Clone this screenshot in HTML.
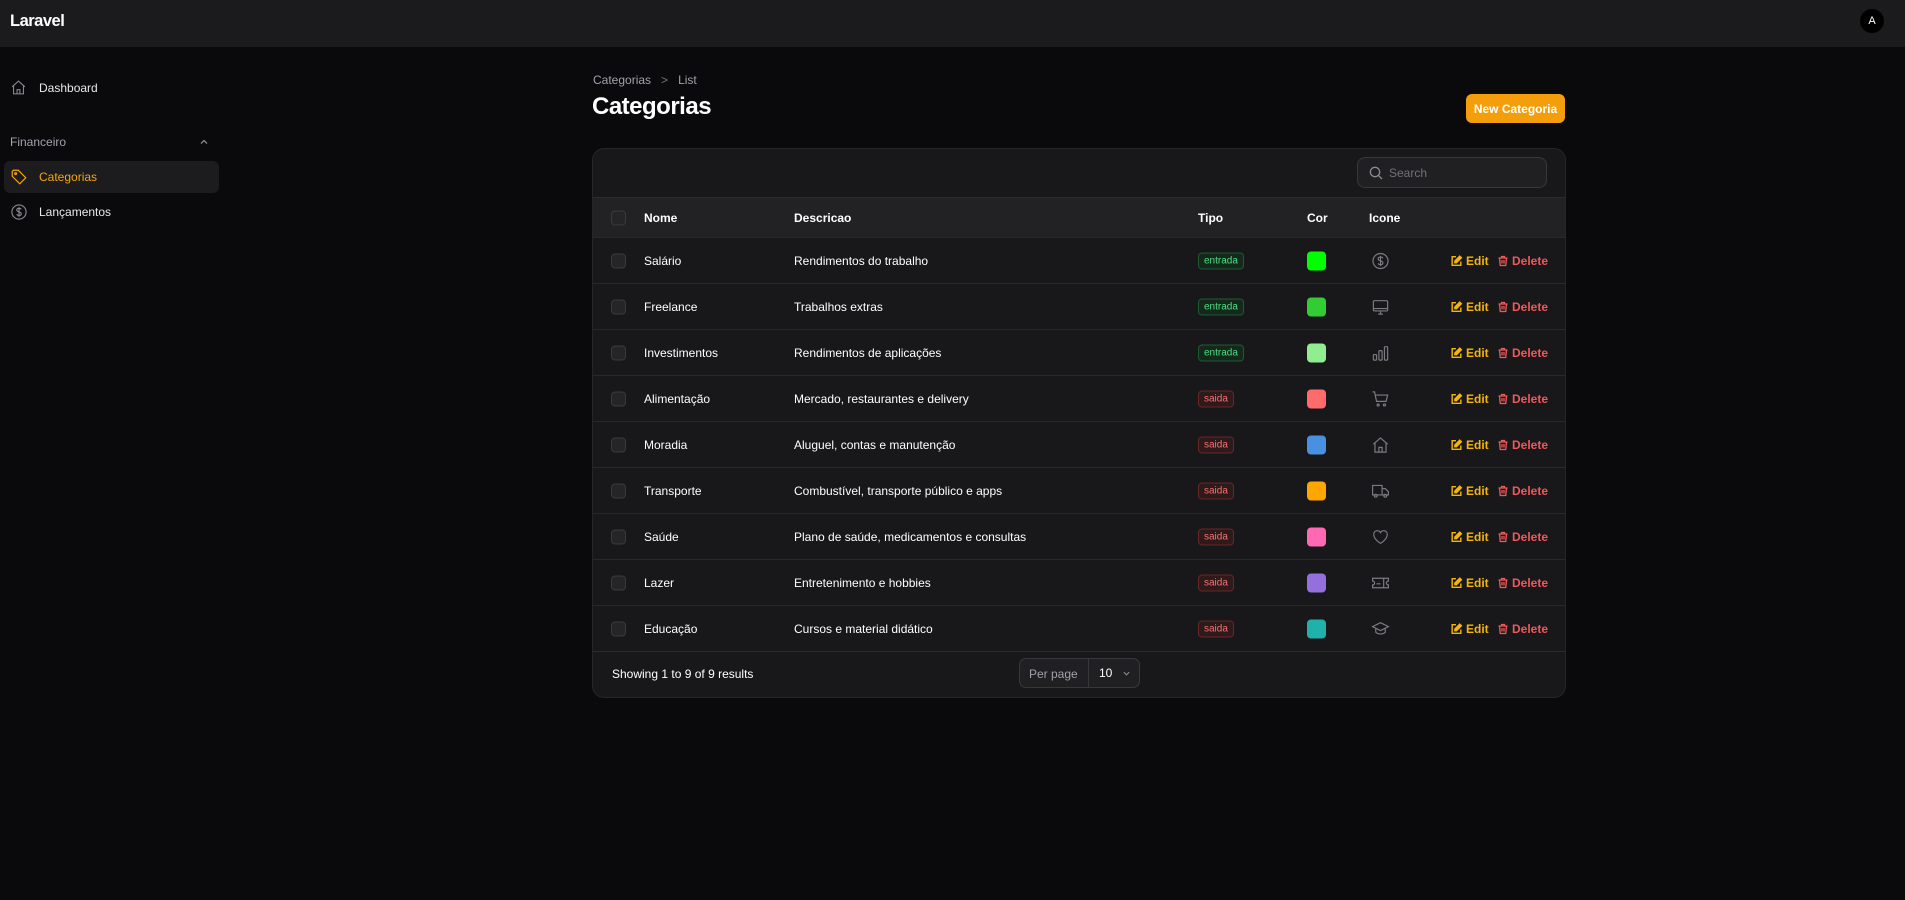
<!DOCTYPE html>
<html><head><meta charset="utf-8"><style>
*{box-sizing:border-box;margin:0;padding:0}
body{width:1905px;height:900px;background:#0a0a0c;font-family:"Liberation Sans",sans-serif;color:#fff;position:relative;overflow:hidden;font-size:12px}
.abs{position:absolute}
.top{left:0;top:0;width:1905px;height:47px;background:#1b1b1d}
.logo{left:10px;top:12px;font-size:16.5px;font-weight:bold;letter-spacing:-0.5px}
.av{left:1860px;top:9px;width:24px;height:24px;border-radius:50%;background:#000;font-size:11px;display:flex;align-items:center;justify-content:center}
.nav{font-size:12px;color:#e8e8ea}
svg{display:block}
.card{left:592px;top:148px;width:974px;height:550px;background:#18181b;border:1px solid #262629;border-radius:12px;overflow:hidden}
.hdr{left:0;top:48px;width:100%;height:41px;background:#222225;border-top:1px solid #2c2c2f}
.row{left:0;width:100%;height:46px;border-top:1px solid #28282b}
.cb{width:15px;height:15px;border:1px solid #3a3a3d;border-radius:4px;background:#252528}
.cell{position:absolute;top:50%;transform:translateY(-50%);white-space:nowrap}
.b{font-weight:bold}
.badge{font-size:10px;padding:2px 5px;border-radius:4px;border:1px solid}
.ent{color:#4ade80;border-color:#1f5a33;background:#14291c}
.sai{color:#f87171;border-color:#6a2626;background:#2e1a1b}
.sw{width:19px;height:19px;border-radius:4px}
.ed{color:#f5b50a;font-weight:bold;font-size:12px}
.dl{color:#f0585a;font-weight:bold;font-size:12px}
</style></head><body>
<div class="abs top"></div>
<div class="abs logo">Laravel</div>
<div class="abs av">A</div>

<svg class="abs" style="left:10px;top:79px" width="17" height="17" viewBox="0 0 24 24" fill="none" stroke="#8a8a90" stroke-width="1.5"><path d="M3 11 12 3l9 8M5 9.5V21h14V9.5M10 21v-6h4v6"/></svg>
<div class="abs nav" style="left:39px;top:81px">Dashboard</div>
<div class="abs" style="left:10px;top:135px;color:#a1a1aa;font-size:12px">Financeiro</div>
<svg class="abs" style="left:199px;top:137px" width="10" height="10" viewBox="0 0 10 10" fill="none" stroke="#8a8a90" stroke-width="1.3"><path d="M2 6.5 5 3.5 8 6.5"/></svg>
<div class="abs" style="left:4px;top:161px;width:215px;height:32px;background:#1c1c1f;border-radius:6px"></div>
<svg class="abs" style="left:10px;top:168px" width="18" height="18" viewBox="0 0 24 24" fill="none" stroke="#f5a50b" stroke-width="1.6"><path d="M3 4.5 4.5 3H11l10 10-8 8L3 11z"/><circle cx="7.5" cy="7.5" r="1.2"/></svg>
<div class="abs nav" style="left:39px;top:170px;color:#f5a50b">Categorias</div>
<svg class="abs" style="left:10px;top:203px" width="18" height="18" viewBox="0 0 24 24" fill="none" stroke="#8a8a90" stroke-width="1.5"><circle cx="12" cy="12" r="9.5"/><path d="M15 8.5c-.5-1-1.7-1.5-3-1.5-1.8 0-3 .9-3 2.3 0 3.2 6 1.7 6 5 0 1.4-1.3 2.3-3 2.3-1.4 0-2.6-.6-3.1-1.6M12 5.5v13"/></svg>
<div class="abs nav" style="left:39px;top:205px">Lançamentos</div>

<div class="abs" style="left:593px;top:73px;color:#a1a1aa;font-size:12px">Categorias&nbsp;&nbsp;&nbsp;<span style="color:#777">&gt;</span>&nbsp;&nbsp;&nbsp;List</div>
<div class="abs" style="left:592px;top:93px;font-size:24px;font-weight:bold;letter-spacing:-0.5px">Categorias</div>
<div class="abs" style="left:1466px;top:94px;width:99px;height:29px;background:#f59e0b;border-radius:6px;font-weight:bold;font-size:12px;display:flex;align-items:center;justify-content:center">New Categoria</div>

<div class="abs card">
 <div class="abs" style="left:764px;top:8px;width:190px;height:31px;border:1px solid #38383c;border-radius:8px;background:#202023"></div>
 <svg class="abs" style="left:775px;top:16px" width="16" height="16" viewBox="0 0 24 24" fill="none" stroke="#8a8a90" stroke-width="2"><circle cx="10.5" cy="10.5" r="7"/><path d="m16 16 5 5"/></svg>
 <div class="abs" style="left:796px;top:17px;color:#71717a;font-size:12px">Search</div>
 <div class="abs hdr">
  <div class="cell cb" style="left:18px"></div>
  <div class="cell b" style="left:51px">Nome</div>
  <div class="cell b" style="left:201px">Descricao</div>
  <div class="cell b" style="left:605px">Tipo</div>
  <div class="cell b" style="left:714px">Cor</div>
  <div class="cell b" style="left:776px">Icone</div>
 </div>
 <div id="rows"></div>
 <div class="abs" style="left:0;top:502px;width:100%;border-top:1px solid #2c2c2f"></div>
 <div class="abs" style="left:19px;top:518px;font-size:12px">Showing 1 to 9 of 9 results</div>
 <div class="abs" style="left:426px;top:509px;width:121px;height:30px;border:1px solid #38383c;border-radius:7px;background:#202023"></div>
 <div class="abs" style="left:495px;top:510px;width:1px;height:28px;background:#38383c"></div>
 <div class="abs" style="left:436px;top:518px;color:#a1a1aa;font-size:12px">Per page</div>
 <div class="abs" style="left:506px;top:517px;font-size:12px">10</div>
 <svg class="abs" style="left:529px;top:520px" width="9" height="9" viewBox="0 0 10 10" fill="none" stroke="#8a8a90" stroke-width="1.2"><path d="M2 3.5 5 6.5 8 3.5"/></svg>
</div>
<script>
const d=[["Salário","Rendimentos do trabalho",1,"#00ff00",'<circle cx="12" cy="12" r="9.5"/><path d="M15 8.5c-.5-1-1.7-1.5-3-1.5-1.8 0-3 .9-3 2.3 0 3.2 6 1.7 6 5 0 1.4-1.3 2.3-3 2.3-1.4 0-2.6-.6-3.1-1.6M12 5.5v13"/>'],
["Freelance","Trabalhos extras",1,"#32cd32",'<rect x="3" y="4" width="18" height="13" rx="1.5"/><path d="M3 14h18M9 21h6M12 17v4"/>'],
["Investimentos","Rendimentos de aplicações",1,"#90ee90",'<rect x="3" y="14" width="4" height="7" rx="1"/><rect x="10" y="9" width="4" height="12" rx="1"/><rect x="17" y="4" width="4" height="17" rx="1"/>'],
["Alimentação","Mercado, restaurantes e delivery",0,"#ff6b6b",'<path d="M2 3h2.5l2.5 12h12l2-8H6"/><circle cx="9" cy="19.5" r="1.3"/><circle cx="17" cy="19.5" r="1.3"/>'],
["Moradia","Aluguel, contas e manutenção",0,"#4a90e2",'<path d="M3 11 12 3l9 8M5 9.5V21h14V9.5M10 21v-6h4v6"/>'],
["Transporte","Combustível, transporte público e apps",0,"#ffa500",'<path d="M2 5h12v12H2zM14 9h4l4 4v4h-8"/><circle cx="6" cy="18" r="1.8"/><circle cx="18" cy="18" r="1.8"/>'],
["Saúde","Plano de saúde, medicamentos e consultas",0,"#ff69b4",'<path d="M12 20s-8.5-5-8.5-11A4.5 4.5 0 0 1 12 6.5 4.5 4.5 0 0 1 20.5 9c0 6-8.5 11-8.5 11z"/>'],
["Lazer","Entretenimento e hobbies",0,"#9370db",'<path d="M2 6h20v3.5a2.5 2.5 0 0 0 0 5V18H2v-3.5a2.5 2.5 0 0 0 0-5z M16 6v12M7 13h5"/>'],
["Educação","Cursos e material didático",0,"#20b2aa",'<path d="M12 4 2 9l10 5 10-5zM6 11v5c3 3 9 3 12 0v-5"/>']];
let h="";d.forEach((r,i)=>{h+=`<div class="abs row" style="top:${88+i*46}px">
<div class="cell cb" style="left:18px"></div>
<div class="cell" style="left:51px">${r[0]}</div>
<div class="cell" style="left:201px">${r[1]}</div>
<div class="cell badge ${r[2]?'ent':'sai'}" style="left:605px">${r[2]?'entrada':'saida'}</div>
<div class="cell sw" style="left:714px;background:${r[3]}"></div>
<svg class="cell" style="left:778px" width="19" height="19" viewBox="0 0 24 24" fill="none" stroke="#7a7a80" stroke-width="1.5">${r[4]}</svg>
<svg class="cell" style="left:857px" width="13" height="13" viewBox="0 0 24 24" fill="none" stroke="#f5b50a" stroke-width="2.6"><path d="M11 4H4v16h16v-7"/><path d="M18 3l3 3-9 9H9v-3z" fill="#f5b50a"/></svg>
<div class="cell ed" style="left:873px">Edit</div>
<svg class="cell" style="left:904px" width="12" height="13" viewBox="0 0 24 24" fill="none" stroke="#f0585a" stroke-width="2.6"><path d="M3 6h18M9 6V3h6v3M5 6l1.5 15h11L19 6M10 10v7M14 10v7"/></svg>
<div class="cell dl" style="left:919px">Delete</div></div>`});
document.getElementById("rows").outerHTML=h;
</script>
</body></html>
